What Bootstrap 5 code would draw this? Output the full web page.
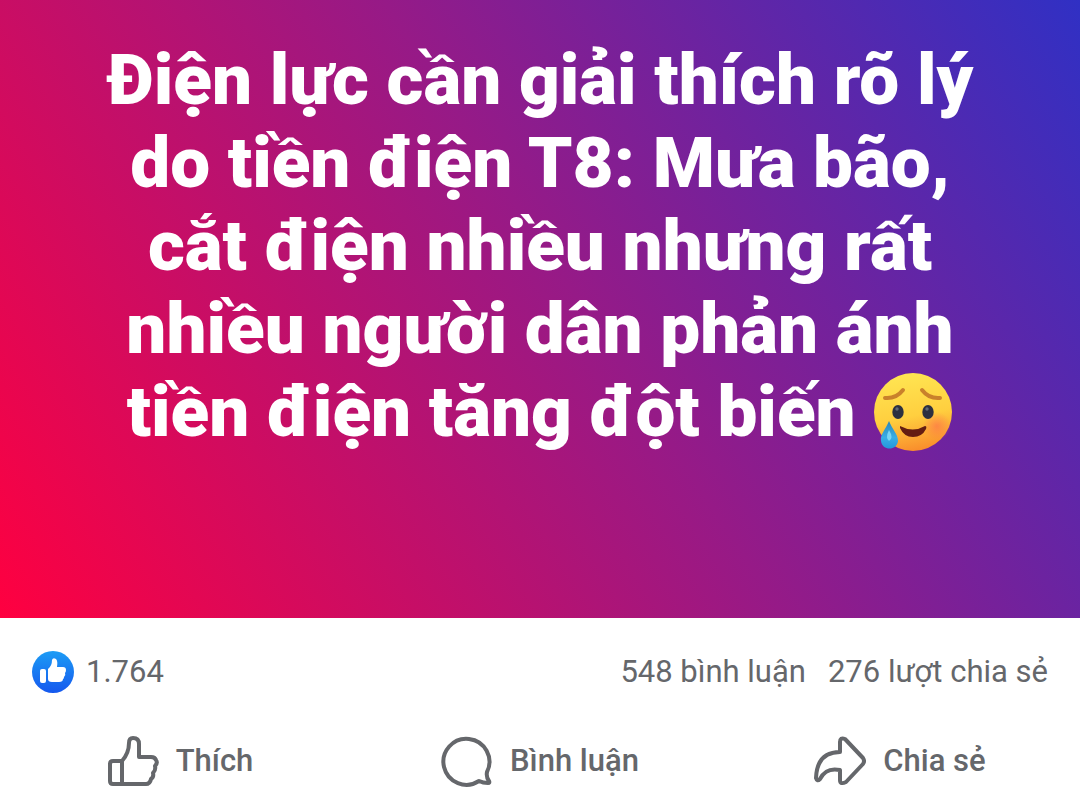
<!DOCTYPE html>
<html lang="vi">
<head>
<meta charset="utf-8">
<meta name="viewport" content="width=device-width, initial-scale=1">
<title>Bài viết</title>
<link href="https://cdn.jsdelivr.net/npm/bootstrap@5.3.0/dist/css/bootstrap.min.css" rel="stylesheet">
<style>
  body { font-family: Roboto, "Noto Sans", sans-serif; background: #fff; color: #65676b; }
  .status-card { background: linear-gradient(57deg, #ff0040 0%, #961a87 53%, #3030c4 100%); padding: 38px 64px 165px; }
  .status-text { font-size: 71px; line-height: 83px; font-weight: 900; color: #fff; }
  .emoji { width: 80px; height: 80px; vertical-align: -16px; }
  .stats { padding: 0 32px; height: 108px; font-size: 31px; line-height: 40px; }
  .stats a { color: inherit; }
  .stats-links { gap: 22px; }
  .reaction { width: 42px; height: 42px; }
  .action { font-size: 31px; line-height: 40px; font-weight: 500; color: #65676b; gap: 17px; height: 70px; }
  .action svg { width: 52px; height: 52px; fill: none; stroke: #65676b; stroke-width: 4; stroke-linejoin: round; stroke-linecap: round; }
</style>
</head>
<body>
<article>
  <div class="status-card text-center">
    <p class="status-text mb-0">Điện lực cần giải thích rõ lý<br>do tiền điện T8: Mưa bão,<br>cắt điện nhiều nhưng rất<br>nhiều người dân phản ánh<br>tiền điện tăng đột biến
      <svg class="emoji" viewBox="0 0 80 80" role="img" aria-label="Mặt cười rơi lệ">
        <defs>
          <linearGradient id="face" x1="0.4" y1="0" x2="0.6" y2="1"><stop offset="0" stop-color="#ffe552"/><stop offset="0.55" stop-color="#ffcf3f"/><stop offset="1" stop-color="#f98b2b"/></linearGradient>
          <radialGradient id="blush"><stop offset="0" stop-color="#ff6a4d" stop-opacity="0.6"/><stop offset="1" stop-color="#ff6a4d" stop-opacity="0"/></radialGradient>
          <linearGradient id="tear" x1="0" y1="0" x2="0" y2="1"><stop offset="0" stop-color="#2a86b8"/><stop offset="0.6" stop-color="#39aee6"/><stop offset="1" stop-color="#2597dc"/></linearGradient>
        </defs>
        <circle cx="40" cy="40" r="39" fill="url(#face)"/>
        <circle cx="64" cy="54" r="14" fill="url(#blush)"/>
        <ellipse cx="25" cy="40" rx="5.7" ry="7" fill="#2c3040"/>
        <ellipse cx="55" cy="40" rx="5.7" ry="7" fill="#2c3040"/>
        <circle cx="24" cy="37" r="1.7" fill="#626977"/><circle cx="54" cy="37" r="1.7" fill="#626977"/>
        <path d="M12 26Q23 27 30 18M67 26Q56 27 49 18" fill="none" stroke="#c9812b" stroke-width="4" stroke-linecap="round"/>
        <path d="M27 54Q40 61 52 54Q54 54 53 57Q49 65 40 65Q31 65 27 56Z" fill="#641d12"/>
        <path d="M16 49C13 57 7 62 8 69C9 79 24 79 25 69C25 62 19 57 16 49Z" fill="url(#tear)"/>
        <path d="M16 58Q12 66 16 69Q21 66 16 58Z" fill="#7ad4f4"/>
      </svg></p>
  </div>

  <div class="stats d-flex align-items-center justify-content-between">
    <div class="d-flex align-items-center gap-2">
      <svg class="reaction" viewBox="0 0 42 42" aria-hidden="true">
        <defs><linearGradient id="like" x1="0" y1="0" x2="0" y2="1"><stop offset="0" stop-color="#1c9cf5"/><stop offset="1" stop-color="#1558ee"/></linearGradient></defs>
        <circle cx="21" cy="21" r="21" fill="url(#like)"/>
        <rect x="8" y="18" width="6" height="14" rx="2" fill="#fff"/>
        <path d="M16 18Q20 15 20 9Q21 6 24 8Q26 10 25 16H31Q34 16 34 19Q34 21 33 22Q34 24 32 26Q32 28 31 28Q31 31 27 31H20Q16 31 16 28Z" fill="#fff"/>
      </svg>
      <span class="ms-1">1.764</span>
    </div>
    <div class="stats-links d-flex">
      <a href="#comments" class="text-decoration-none">548 bình luận</a>
      <a href="#shares" class="text-decoration-none">276 lượt chia sẻ</a>
    </div>
  </div>

  <div class="row g-0">
    <div class="col-4">
      <button type="button" class="action btn border-0 rounded-0 w-100 p-0 d-flex align-items-center justify-content-center">
        <svg viewBox="0 0 52 52" aria-hidden="true"><path d="M15 26H6Q3 26 3 29V46Q3 49 6 49H39Q43 49 44 44Q47 42 46 38Q49 35 48 31Q51 28 49 25Q48 22 44 22H32V9Q32 3 26 3Q22 3 22 8Q22 18 15 26V49"/></svg>
        <span>Thích</span>
      </button>
    </div>
    <div class="col-4">
      <button type="button" class="action btn border-0 rounded-0 w-100 p-0 d-flex align-items-center justify-content-center">
        <svg viewBox="0 0 52 52" aria-hidden="true"><path d="M46 37A23 23 0 1 0 38 46Q42 48 47 48Q49 48 48 46Q45 42 46 37Z"/></svg>
        <span>Bình luận</span>
      </button>
    </div>
    <div class="col-4">
      <button type="button" class="action btn border-0 rounded-0 w-100 p-0 d-flex align-items-center justify-content-center">
        <svg viewBox="0 0 52 52" aria-hidden="true"><path d="M26 17V7Q26 2 31 4L49 23Q51 26 49 29L32 47Q26 50 26 45V35Q12 32 6 44Q3 47 2 43Q3 17 26 17Z"/></svg>
        <span>Chia sẻ</span>
      </button>
    </div>
  </div>
</article>
<script src="https://cdn.jsdelivr.net/npm/bootstrap@5.3.0/dist/js/bootstrap.bundle.min.js"></script>
</body>
</html>
